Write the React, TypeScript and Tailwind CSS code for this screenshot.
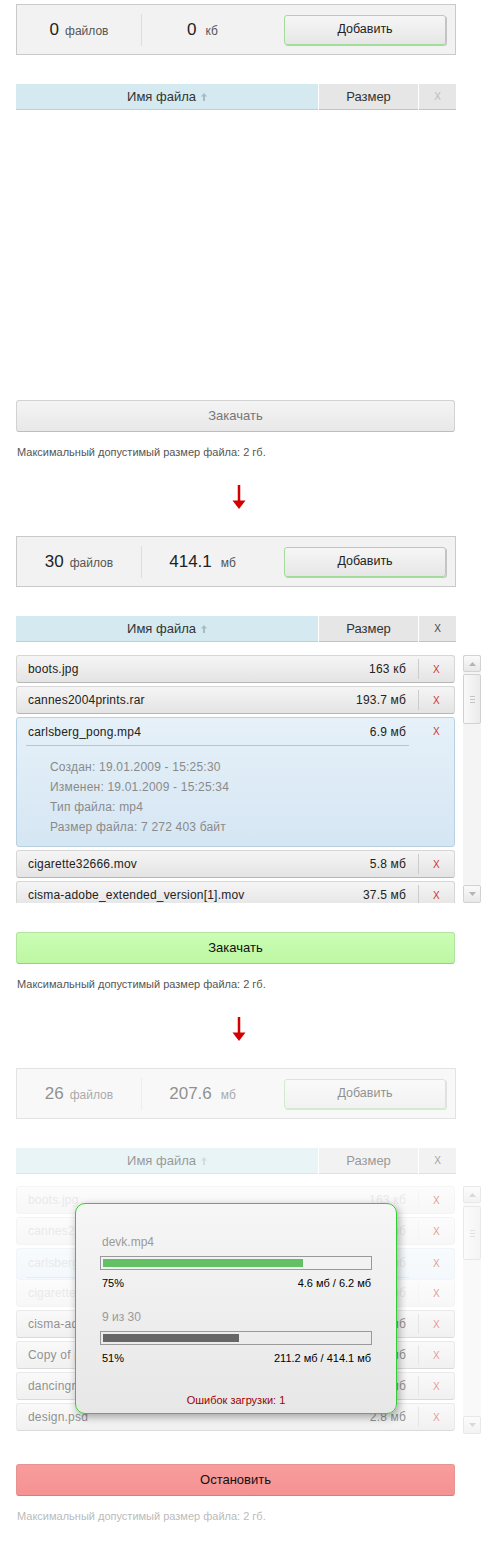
type FileItem = {
  name: string;
  size: string;
  done?: boolean;
  open?: boolean;
  collapsing?: boolean;
};

const details = [
  "Создан: 19.01.2009 - 15:25:30",
  "Изменен: 19.01.2009 - 15:25:34",
  "Тип файла: mp4",
  "Размер файла: 7 272 403 байт",
];

const queued: FileItem[] = [
  { name: "boots.jpg", size: "163 кб" },
  { name: "cannes2004prints.rar", size: "193.7 мб" },
  { name: "carlsberg_pong.mp4", size: "6.9 мб", open: true },
  { name: "cigarette32666.mov", size: "5.8 мб" },
  { name: "cisma-adobe_extended_version[1].mov", size: "37.5 мб" },
];

const uploading: FileItem[] = [
  { name: "boots.jpg", size: "163 кб", done: true },
  { name: "cannes2004prints.rar", size: "193.7 мб", done: true },
  { name: "carlsberg_pong.mp4", size: "6.9 мб", done: true, collapsing: true },
  { name: "cigarette32666.mov", size: "5.8 мб", done: true },
  { name: "cisma-adobe_extended_version[1].mov", size: "37.5 мб" },
  { name: "Copy of presentation.pps", size: "12.6 мб" },
  { name: "dancingrobot.avi", size: "24.3 мб" },
  { name: "design.psd", size: "2.8 мб" },
];

function Stats({ count, total, unit }: { count: string; total: string; unit: string }) {
  return (
    <div className="flex h-[51px] w-[440px] items-center border border-[#c9c9c9] bg-[#f2f2f2]">
      <div className="flex w-[124px] items-baseline justify-center">
        <span className="text-[17px] text-[#222]">{count}</span>
        <span className="ml-[6px] text-[12px] text-[#555]">файлов</span>
      </div>
      <div className="h-[32px] w-px bg-[#dddddd]" />
      <div className="flex w-[121px] items-baseline justify-center">
        <span className="text-[17px] text-[#222]">{total}</span>
        <span className="ml-[9px] text-[12px] text-[#555]">{unit}</span>
      </div>
      <button className="ml-auto mr-[9px] flex h-[30px] w-[162px] items-center justify-center rounded-[3px] border border-[#a3db9b] bg-linear-to-b from-[#f6f6f6] to-[#e6e6e6] text-[12.5px] text-[#222] shadow-[1px_1px_0_#c4c4c4]">
        Добавить
      </button>
    </div>
  );
}

function Header({ empty }: { empty?: boolean }) {
  return (
    <div className="mt-[29px] flex h-[26px] w-[440px] gap-px text-[13px] text-[#333]">
      <div className="flex w-[302px] items-center justify-center border-b border-[#b9d0d6] bg-[#d4eaf0]">
        Имя файла
        <svg className="ml-[5px]" width="6" height="8" viewBox="0 0 6 8">
          <path d="M3 0L6 3.5H4V8H2V3.5H0Z" fill="#a9bcc2" />
        </svg>
      </div>
      <div className="flex w-[99px] items-center justify-center border-b border-[#c2c2c2] bg-[#e6e6e6]">Размер</div>
      <div
        className={`flex flex-1 items-center justify-center border-b border-[#c2c2c2] bg-[#e6e6e6] text-[10px] ${
          empty ? "text-[#bbbbbb]" : "text-[#444]"
        }`}
      >
        X
      </div>
    </div>
  );
}

function RowLine({ file, tone, divider }: { file: FileItem; tone: string; divider: string }) {
  return (
    <>
      <span className={`flex-1 truncate pl-[11px] ${tone}`}>{file.name}</span>
      <span className={tone}>{file.size}</span>
      <span className={`ml-[12px] h-[20px] w-px ${divider}`} />
      <span className="w-[35px] text-center text-[10px] text-[#cc3333]">X</span>
    </>
  );
}

function FileRow({ file }: { file: FileItem }) {
  if (file.open) {
    return (
      <div className="mb-[3px] h-[130px] shrink-0 rounded-[3px] border border-[#b9d0e1] bg-linear-to-b from-[#e6f1f9] to-[#d5e6f3] text-[12px] tracking-[0.2px]">
        <div className="flex h-[27px] items-center">
          <RowLine file={file} tone="text-[#222]" divider="bg-transparent" />
        </div>
        <div className="ml-[9px] h-px w-[383px] bg-[#b3c7d6]" />
        <div className="pl-[33px] pt-[11px] leading-[20px] text-[#8a8a8a]">
          {details.map((d) => (
            <div key={d}>{d}</div>
          ))}
        </div>
      </div>
    );
  }

  if (file.collapsing) {
    return (
      <div className="h-[31px] shrink-0 overflow-hidden rounded-t-[3px] border border-b-0 border-[#e2ecf3] bg-linear-to-b from-[#f1f8fc] to-[#e9f3fa] text-[12px] tracking-[0.2px]">
        <div className="flex h-[28px] items-center">
          <RowLine file={file} tone="text-[#d4d4d4]" divider="bg-transparent" />
        </div>
        <div className="ml-[9px] h-px w-[383px] bg-[#d0dde6]" />
      </div>
    );
  }

  const shell = file.done
    ? "border-[#ebebeb] from-[#fafafa] to-[#f1f1f1]"
    : "border-[#d6d6d6] border-b-[#b6b6b6] from-[#f5f5f5] to-[#e4e4e4]";

  return (
    <div
      className={`mb-[3px] flex h-[28px] shrink-0 items-center rounded-[3px] border bg-linear-to-b text-[12px] tracking-[0.2px] ${shell}`}
    >
      <RowLine
        file={file}
        tone={file.done ? "text-[#d4d4d4]" : "text-[#222]"}
        divider={file.done ? "bg-[#ececec]" : "bg-[#cccccc]"}
      />
    </div>
  );
}

function ScrollBar({ thumb }: { thumb: string }) {
  return (
    <div className="ml-[8px] flex h-[248px] w-[18px] flex-col bg-[#f4f4f4]">
      <div className="flex h-[17px] items-center justify-center rounded-[2px] border border-[#d2d2d2] bg-linear-to-b from-[#fafafa] to-[#e8e8e8]">
        <svg width="7" height="4" viewBox="0 0 7 4">
          <path d="M3.5 0L7 4H0Z" fill="#b4b4b4" />
        </svg>
      </div>
      <div
        className={`flex flex-col items-center justify-center gap-[2px] rounded-[2px] border border-[#d2d2d2] bg-linear-to-r from-[#f9f9f9] to-[#ebebeb] ${thumb}`}
      >
        <span className="h-px w-[5px] bg-[#c4c4c4]" />
        <span className="h-px w-[5px] bg-[#c4c4c4]" />
        <span className="h-px w-[5px] bg-[#c4c4c4]" />
      </div>
      <div className="mt-auto flex h-[18px] items-center justify-center rounded-[2px] border border-[#d2d2d2] bg-linear-to-b from-[#fafafa] to-[#e8e8e8]">
        <svg width="7" height="4" viewBox="0 0 7 4">
          <path d="M0 0H7L3.5 4Z" fill="#b4b4b4" />
        </svg>
      </div>
    </div>
  );
}

function FileList({ files, thumb }: { files: FileItem[]; thumb: string }) {
  return (
    <div className="flex">
      <div className="flex h-[248px] w-[439px] flex-col overflow-hidden">
        {files.map((f) => (
          <FileRow key={f.name} file={f} />
        ))}
      </div>
      <ScrollBar thumb={thumb} />
    </div>
  );
}

function Note({ faded }: { faded?: boolean }) {
  return (
    <p className={`mt-[12px] pl-[1px] text-[11px] leading-[16px] ${faded ? "text-[#bbbbbb]" : "text-[#555]"}`}>
      Максимальный допустимый размер файла: 2 гб.
    </p>
  );
}

function DownArrow() {
  return (
    <div className="mb-[27px] mt-[25px] flex h-[24px] w-[440px] justify-center pl-[6px]">
      <svg width="14" height="24" viewBox="0 0 14 24">
        <rect x="5.75" y="0" width="2.5" height="17" fill="#d40000" />
        <path d="M0.5 15.5H13.5L7 24Z" fill="#d40000" />
      </svg>
    </div>
  );
}

function Progress({ title, percent, amount, fill }: { title: string; percent: number; amount: string; fill: string }) {
  return (
    <div>
      <div className="pl-[2px] text-[12px] leading-[16px] text-[#9a9a9a]">{title}</div>
      <div className="mt-[6px] h-[14px] border border-[#999] p-[2px]">
        <div className={`h-full ${fill}`} style={{ width: `${percent}%` }} />
      </div>
      <div className="mt-[6px] flex justify-between pl-[2px] pr-px text-[11px] leading-[14px] text-black">
        <span>{percent}%</span>
        <span>{amount}</span>
      </div>
    </div>
  );
}

export default function App() {
  return (
    <div className="min-h-[1550px] bg-white pl-[16px] pt-[4px] font-['Liberation_Sans',Arial,sans-serif]">
      {/* empty */}
      <Stats count="0" total="0" unit="кб" />
      <Header empty />
      <div className="mt-[13px] h-[248px]" />
      <button className="mt-[29px] flex h-[32px] w-[439px] items-center justify-center rounded-[3px] border border-[#d2d2d2] border-b-[#bdbdbd] bg-linear-to-b from-[#f4f4f4] to-[#e8e8e8] text-[13px] text-[#777]">
        Закачать
      </button>
      <Note />
      <DownArrow />

      {/* files selected */}
      <Stats count="30" total="414.1" unit="мб" />
      <Header />
      <div className="mt-[13px]">
        <FileList files={queued} thumb="mt-[2px] h-[50px]" />
      </div>
      <button className="mt-[29px] flex h-[32px] w-[439px] items-center justify-center rounded-[3px] border border-[#b3e29f] border-b-[#9fc98c] bg-linear-to-b from-[#cbfdb5] to-[#bdf7a3] text-[13px] text-[#111]">
        Закачать
      </button>
      <Note />
      <DownArrow />

      {/* uploading */}
      <div className="opacity-50">
        <Stats count="26" total="207.6" unit="мб" />
        <Header />
      </div>
      <div className="relative mt-[12px]">
        <div className="opacity-50">
          <FileList files={uploading} thumb="mt-[3px] h-[54px]" />
        </div>
        <div className="absolute left-[59px] top-[17px] h-[211px] w-[322px] rounded-[10px] border border-[#33cc33] bg-linear-to-b from-[#f6f6f6] to-[#e7e7e7] px-[24px] pt-[30px] shadow-[2px_3px_8px_rgba(0,0,0,0.35)]">
          <Progress title="devk.mp4" percent={75} amount="4.6 мб / 6.2 мб" fill="bg-[#64c064]" />
          <div className="mt-[19px]">
            <Progress title="9 из 30" percent={51} amount="211.2 мб / 414.1 мб" fill="bg-[#666666]" />
          </div>
          <div className="mt-[28px] text-center text-[11px] leading-[14px] text-[#a00000]">Ошибок загрузки: 1</div>
        </div>
      </div>
      <button className="mt-[30px] flex h-[32px] w-[439px] items-center justify-center rounded-[3px] border border-[#e89393] border-b-[#c98181] bg-linear-to-b from-[#f99c9c] to-[#f59292] text-[13px] text-[#111]">
        Остановить
      </button>
      <Note faded />
    </div>
  );
}
